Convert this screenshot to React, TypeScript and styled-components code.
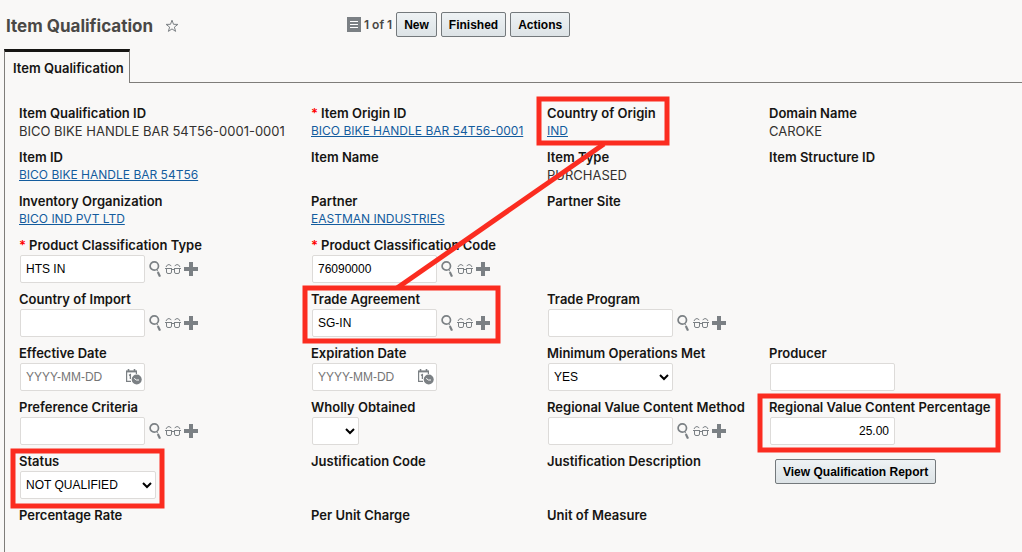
import React from "react";
import styled, { createGlobalStyle } from "styled-components";

const GlobalStyle = createGlobalStyle`
  *, *::before, *::after { box-sizing: border-box; }
  body {
    margin: 0;
    background: #f9f8f7;
    color: #161513;
    font: 400 13px/18px Inter, "Liberation Sans", sans-serif;
  }
`;

const Page = styled.main`
  position: relative;
  display: flex;
  flex-direction: column;
  min-height: 100vh;
  overflow: hidden;
`;

const Header = styled.header`
  display: flex;
  align-items: center;
  height: 49px;
  padding-left: 6px;
`;

const TitleGroup = styled.div`
  display: flex;
  align-items: center;
  gap: 12px;
  width: 341px;
  padding-top: 2px;
`;

const Title = styled.h1`
  margin: 0;
  color: #4a4846;
  font-size: 17px;
  line-height: 24px;
  font-weight: 700;
`;

const Toolbar = styled.div`
  display: flex;
  align-items: center;
  gap: 4px;
`;

const Pager = styled.span`
  display: flex;
  align-items: center;
  gap: 3px;
  color: #4a4846;
  font-size: 12px;
  font-weight: 600;
  white-space: nowrap;
`;

const Button = styled.button`
  height: 25px;
  padding: 0 7px;
  border: 1px solid #74797c;
  border-radius: 2px;
  background: linear-gradient(#eef2f4, #dde3e6);
  color: #000;
  font: 700 12px/16px "Liberation Sans", Arial, sans-serif;
  white-space: nowrap;
`;

const IconButton = styled.button`
  display: flex;
  padding: 0;
  border: 0;
  background: none;
  color: #7b8084;
`;

const TabBar = styled.div`
  display: flex;
  height: 34px;
  padding-left: 4px;
`;

const Tab = styled.button`
  padding: 1px 5px 0 8px;
  border: solid #7f7d7a;
  border-width: 3px 1px 0;
  border-top-color: #161513;
  background: transparent;
  color: #161513;
  font: 600 13px/18px Inter, "Liberation Sans", sans-serif;
  white-space: nowrap;
`;

const TabRule = styled.div`
  flex: 1;
  border-bottom: 1px solid #7f7d7a;
`;

const Panel = styled.section`
  flex: 1;
  margin-left: 4px;
  padding: 21px 0 0 14px;
  border-left: 1px solid #7f7d7a;
`;

const Row = styled.div<{ $tall?: boolean }>`
  display: grid;
  grid-template-columns: 292fr 236fr 222fr 253fr;
  min-height: ${(p) => (p.$tall ? 54 : 44)}px;
`;

const Cell = styled.div`
  min-width: 0;
  white-space: nowrap;
`;

const Label = styled.label`
  display: block;
  font-weight: 600;
`;

const Required = styled.span`
  margin-right: 3px;
  color: #f00;
`;

const Value = styled.div`
  color: #33312f;
`;

const Link = styled.a`
  display: block;
  width: fit-content;
  color: #145c9e;
  font-size: 12px;
  line-height: 18px;
  text-decoration: underline;
`;

const Control = styled.div`
  display: flex;
  align-items: center;
  margin: 1px 0 0 1px;
`;

const TextInput = styled.input<{ $right?: boolean }>`
  width: 125px;
  height: 28px;
  padding: 0 5px;
  border: 1px solid #dddbd9;
  border-radius: 2px;
  background: #fff;
  color: #000;
  font: 400 12px/16px "Liberation Sans", Arial, sans-serif;
  text-align: ${(p) => (p.$right ? "right" : "left")};
  &::placeholder { color: #757575; }
`;

const Select = styled.select<{ $width: number }>`
  width: ${(p) => p.$width}px;
  height: 28px;
  padding: 0 1px;
  border: 1px solid #dddbd9;
  border-radius: 2px;
  background: #fff;
  color: #000;
  font: 400 12px/16px "Liberation Sans", Arial, sans-serif;
`;

const LookupIcons = styled.div`
  display: flex;
  align-items: center;
  gap: 3px;
  margin-left: 4px;
`;

const DateBox = styled.div`
  position: relative;
`;

const CalendarSlot = styled.div`
  position: absolute;
  right: 3px;
  top: 5px;
`;

const ReportCell = styled(Cell)`
  padding: 7px 0 0 6px;
`;

const Annotations = styled.svg`
  position: absolute;
  top: 0;
  left: 0;
  pointer-events: none;
`;

const StarIcon = () => (
  <svg width="14" height="14" viewBox="0 0 14 14" fill="none" stroke="currentColor" strokeWidth="1">
    <path d="M7 1.2 8.5 5.3 12.9 5.4 9.4 8.1 10.6 12.4 7 9.9 3.4 12.4 4.6 8.1 1.1 5.4 5.5 5.3Z" />
  </svg>
);

const ListIcon = () => (
  <svg width="14" height="15" viewBox="0 0 14 15">
    <rect width="14" height="15" fill="#7b8084" />
    <path d="M3 4.5h8M3 7.5h8M3 10.5h8" stroke="#fff" />
  </svg>
);

const SearchIcon = () => (
  <svg width="13" height="18" viewBox="0 0 13 18" fill="none" stroke="currentColor">
    <circle cx="5.3" cy="6" r="4.2" strokeWidth="1.7" />
    <path d="M8.8 12 11 16.6" strokeWidth="2.2" />
    <path d="M7.8 9.6 8.8 11.4" strokeWidth="1" />
  </svg>
);

const GlassesIcon = () => (
  <svg width="16" height="12" viewBox="0 0 16 12" fill="none" stroke="currentColor" strokeWidth="1">
    <path d="M0 5.5H7M9 5.5H16" />
    <path d="M1.5 5.5V9Q1.5 10.5 3 10.5H5Q6.5 10.5 6.5 9V5.5M9.5 5.5V9Q9.5 10.5 11 10.5H13Q14.5 10.5 14.5 9V5.5" />
    <path d="M6.5 6.5H9.5" />
    <path d="M1 4Q2 1.5 4 1.5L6.3 2.8M15 4Q14 1.5 12 1.5L9.7 2.8" />
  </svg>
);

const PlusIcon = () => (
  <svg width="14" height="14" viewBox="0 0 14 14">
    <path d="M5 0h4v5h5v4H9v5H5V9H0V5h5Z" fill="currentColor" />
  </svg>
);

const CalendarIcon = () => (
  <svg width="17" height="17" viewBox="0 0 17 17" fill="none" stroke="currentColor">
    <path d="M6 13.4H1.6V3.5M11.4 3.5V6" strokeWidth="1.2" />
    <path d="M1 3.4H12" strokeWidth="2" />
    <path d="M3.5 1V4M9.5 1V4" strokeWidth="1.6" />
    <path d="M4 7.4 5.4 6.6V11" strokeWidth="1.3" />
    <circle cx="11.7" cy="11.5" r="5" fill="currentColor" stroke="none" />
    <path d="M9.2 10.4 11.4 12H14" stroke="#fff" />
  </svg>
);

type FieldProps = { id?: string; label: string; required?: boolean; children?: React.ReactNode };

const Field = ({ id, label, required, children }: FieldProps) => (
  <Cell>
    <Label as={id ? "label" : "div"} {...(id ? { htmlFor: id } : {})}>
      {required && <Required>*</Required>}
      {label}
    </Label>
    {children}
  </Cell>
);

const LookupField = ({ id, label, required, value = "" }: { id: string; label: string; required?: boolean; value?: string }) => (
  <Field id={id} label={label} required={required}>
    <Control>
      <TextInput id={id} defaultValue={value} />
      <LookupIcons>
        <IconButton aria-label={`Search ${label}`}><SearchIcon /></IconButton>
        <IconButton aria-label={`View ${label}`}><GlassesIcon /></IconButton>
        <IconButton aria-label={`Add ${label}`}><PlusIcon /></IconButton>
      </LookupIcons>
    </Control>
  </Field>
);

const DateField = ({ id, label }: { id: string; label: string }) => (
  <Field id={id} label={label}>
    <Control>
      <DateBox>
        <TextInput id={id} placeholder="YYYY-MM-DD" />
        <CalendarSlot>
          <IconButton aria-label={`Choose ${label}`}><CalendarIcon /></IconButton>
        </CalendarSlot>
      </DateBox>
    </Control>
  </Field>
);

const SelectField = ({ id, label, width, options }: { id: string; label: string; width: number; options: string[] }) => (
  <Field id={id} label={label}>
    <Control>
      <Select id={id} $width={width} defaultValue={options[0]}>
        {options.map((o) => <option key={o}>{o}</option>)}
      </Select>
    </Control>
  </Field>
);

export default function App() {
  return (
    <>
      <GlobalStyle />
      <Page>
        <Header>
          <TitleGroup>
            <Title>Item Qualification</Title>
            <IconButton aria-label="Add to favorites"><StarIcon /></IconButton>
          </TitleGroup>
          <Toolbar>
            <Pager><ListIcon />1 of 1</Pager>
            <Button>New</Button>
            <Button>Finished</Button>
            <Button>Actions</Button>
          </Toolbar>
        </Header>
        <TabBar>
          <Tab>Item Qualification</Tab>
          <TabRule />
        </TabBar>
        <Panel>
          <Row>
            <Field label="Item Qualification ID"><Value>BICO BIKE HANDLE BAR 54T56-0001-0001</Value></Field>
            <Field label="Item Origin ID" required><Link href="#origin">BICO BIKE HANDLE BAR 54T56-0001</Link></Field>
            <Field label="Country of Origin"><Link href="#country">IND</Link></Field>
            <Field label="Domain Name"><Value>CAROKE</Value></Field>
          </Row>
          <Row>
            <Field label="Item ID"><Link href="#item">BICO BIKE HANDLE BAR 54T56</Link></Field>
            <Field label="Item Name" />
            <Field label="Item Type"><Value>PURCHASED</Value></Field>
            <Field label="Item Structure ID" />
          </Row>
          <Row>
            <Field label="Inventory Organization"><Link href="#organization">BICO IND PVT LTD</Link></Field>
            <Field label="Partner"><Link href="#partner">EASTMAN INDUSTRIES</Link></Field>
            <Field label="Partner Site" />
          </Row>
          <Row $tall>
            <LookupField id="class-type" label="Product Classification Type" required value="HTS IN" />
            <LookupField id="class-code" label="Product Classification Code" required value="76090000" />
          </Row>
          <Row $tall>
            <LookupField id="import-country" label="Country of Import" />
            <LookupField id="agreement" label="Trade Agreement" value="SG-IN" />
            <LookupField id="program" label="Trade Program" />
          </Row>
          <Row $tall>
            <DateField id="effective" label="Effective Date" />
            <DateField id="expiration" label="Expiration Date" />
            <SelectField id="min-ops" label="Minimum Operations Met" width={125} options={["YES", "NO"]} />
            <Field id="producer" label="Producer"><Control><TextInput id="producer" /></Control></Field>
          </Row>
          <Row $tall>
            <LookupField id="preference" label="Preference Criteria" />
            <SelectField id="wholly" label="Wholly Obtained" width={47} options={["", "Y", "N"]} />
            <LookupField id="rvc-method" label="Regional Value Content Method" />
            <Field id="rvc-percent" label="Regional Value Content Percentage">
              <Control><TextInput id="rvc-percent" $right defaultValue="25.00" /></Control>
            </Field>
          </Row>
          <Row $tall>
            <SelectField id="status" label="Status" width={136} options={["NOT QUALIFIED", "QUALIFIED"]} />
            <Field label="Justification Code" />
            <Field label="Justification Description" />
            <ReportCell><Button>View Qualification Report</Button></ReportCell>
          </Row>
          <Row>
            <Field label="Percentage Rate" />
            <Field label="Per Unit Charge" />
            <Field label="Unit of Measure" />
          </Row>
        </Panel>
        <Annotations width="1022" height="552" fill="none" stroke="#fb2c20" strokeWidth="5" aria-hidden="true">
          <rect x="539" y="99" width="128" height="44" />
          <rect x="305" y="288" width="193" height="53" />
          <rect x="760" y="396" width="238" height="54" />
          <rect x="13" y="451" width="149" height="55" />
          <path d="M604 144 397 288" />
        </Annotations>
      </Page>
    </>
  );
}
